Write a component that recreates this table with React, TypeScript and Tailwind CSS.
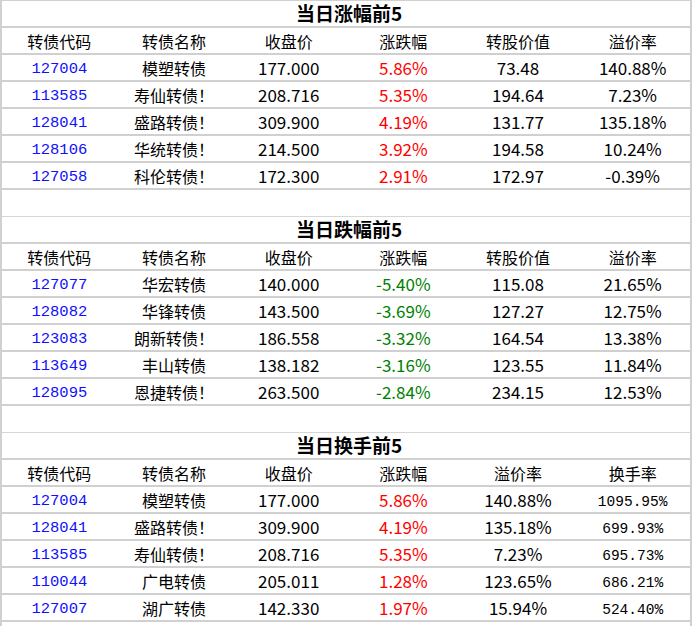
import React from "react";

type Tone = "red" | "green" | "plain";

interface Section {
  title: string;
  headers: string[];
  rows: string[][];
  lastMono?: boolean;
}

const sections: Section[] = [
  {
    title: "当日涨幅前5",
    headers: ["转债代码", "转债名称", "收盘价", "涨跌幅", "转股价值", "溢价率"],
    rows: [
      ["127004", "模塑转债", "177.000", "5.86%", "73.48", "140.88%"],
      ["113585", "寿仙转债！", "208.716", "5.35%", "194.64", "7.23%"],
      ["128041", "盛路转债！", "309.900", "4.19%", "131.77", "135.18%"],
      ["128106", "华统转债！", "214.500", "3.92%", "194.58", "10.24%"],
      ["127058", "科伦转债！", "172.300", "2.91%", "172.97", "-0.39%"],
    ],
  },
  {
    title: "当日跌幅前5",
    headers: ["转债代码", "转债名称", "收盘价", "涨跌幅", "转股价值", "溢价率"],
    rows: [
      ["127077", "华宏转债", "140.000", "-5.40%", "115.08", "21.65%"],
      ["128082", "华锋转债", "143.500", "-3.69%", "127.27", "12.75%"],
      ["123083", "朗新转债！", "186.558", "-3.32%", "164.54", "13.38%"],
      ["113649", "丰山转债", "138.182", "-3.16%", "123.55", "11.84%"],
      ["128095", "恩捷转债！", "263.500", "-2.84%", "234.15", "12.53%"],
    ],
  },
  {
    title: "当日换手前5",
    headers: ["转债代码", "转债名称", "收盘价", "涨跌幅", "溢价率", "换手率"],
    lastMono: true,
    rows: [
      ["127004", "模塑转债", "177.000", "5.86%", "140.88%", "1095.95%"],
      ["128041", "盛路转债！", "309.900", "4.19%", "135.18%", "699.93%"],
      ["113585", "寿仙转债！", "208.716", "5.35%", "7.23%", "695.73%"],
      ["110044", "广电转债", "205.011", "1.28%", "123.65%", "686.21%"],
      ["127007", "湖广转债", "142.330", "1.97%", "15.94%", "524.40%"],
    ],
  },
];

const cjk = "font-['Noto_Sans_CJK_SC',sans-serif]";
const mono = "font-['Liberation_Mono','Noto_Sans_CJK_SC',monospace] pt-[5px]";

const toneOf = (v: string): Tone =>
  v.startsWith("-") ? "green" : "red";

const Cell: React.FC<{ children: React.ReactNode; className?: string }> = ({
  children,
  className = "",
}) => (
  <div className={`flex items-center justify-center leading-none whitespace-nowrap ${className}`}>
    {children}
  </div>
);

const SectionBlock: React.FC<{ s: Section; first: boolean }> = ({ s, first }) => (
  <>
    {!first && <div className="h-[27px] border-b border-[#d6d6d6]" />}
    <div className="h-[27px] border-b-2 border-[#d0d0d0] flex items-center justify-center">
      <span className={`${cjk} text-[19px] font-bold text-black pl-[6px]`}>{s.title}</span>
    </div>
    <div className="h-[27px] border-b-2 border-[#d0d0d0] grid grid-cols-6">
      {s.headers.map((h) => (
        <Cell key={h} className={`${cjk} text-[16px] text-black`}>
          {h}
        </Cell>
      ))}
    </div>
    {s.rows.map((r) => {
      const tone = toneOf(r[3]);
      return (
        <div key={r[0] + r[1]} className="h-[27px] border-b-2 border-[#d0d0d0] grid grid-cols-6">
          <Cell className={`${mono} text-[15.5px] text-[#1010ff]`}>{r[0]}</Cell>
          <Cell className={`${cjk} text-[16px] text-black`}>{r[1]}</Cell>
          <Cell className={`${cjk} text-[17px] text-black`}>{r[2]}</Cell>
          <Cell
            className={`${cjk} text-[17px] ${
              tone === "green" ? "text-[#008000]" : "text-[#ff0000]"
            }`}
          >
            {r[3]}
          </Cell>
          <Cell className={`${cjk} text-[17px] text-black`}>{r[4]}</Cell>
          <Cell
            className={
              s.lastMono
                ? `${mono} text-[14.5px] text-black`
                : `${cjk} text-[17px] text-black`
            }
          >
            {r[5]}
          </Cell>
        </div>
      );
    })}
  </>
);

export default function App() {
  return (
    <div className="w-[693px] h-[626px] bg-white overflow-hidden">
      <div className="w-[692px] h-[626px] border-x-2 border-t border-[#d0d0d0]">
        {sections.map((s, i) => (
          <SectionBlock key={s.title} s={s} first={i === 0} />
        ))}
      </div>
    </div>
  );
}
